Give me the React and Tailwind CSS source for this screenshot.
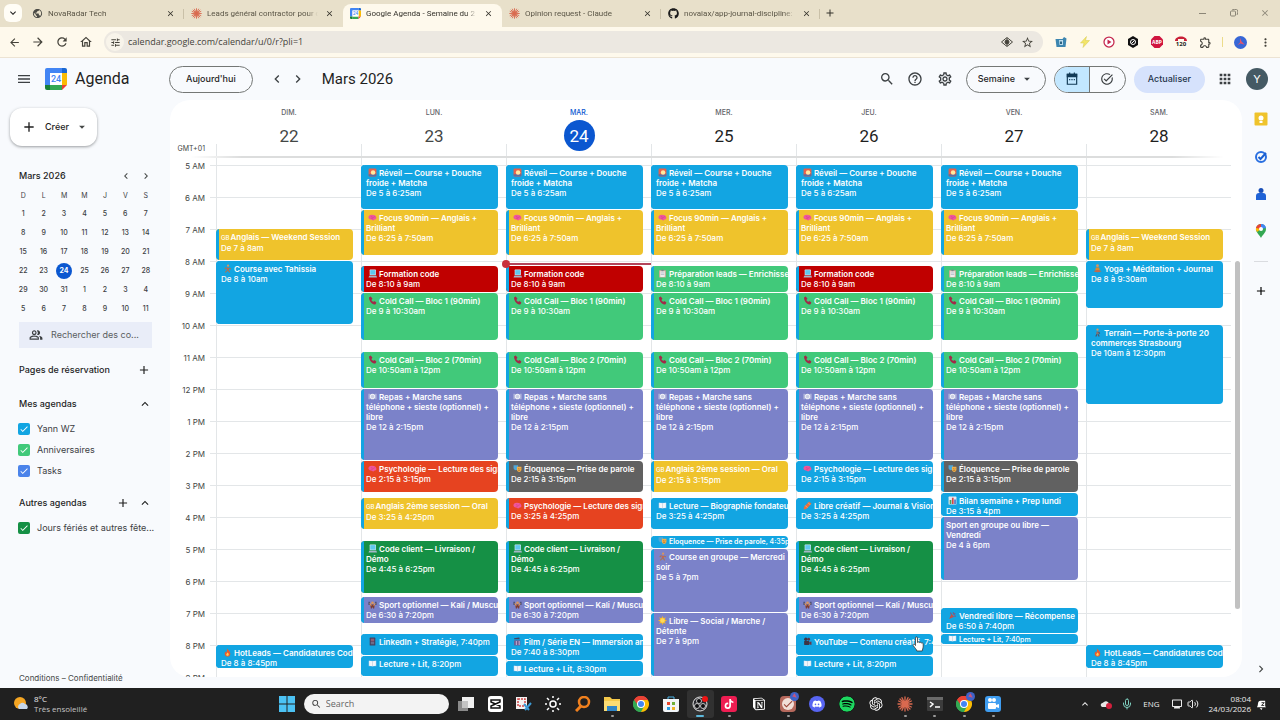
import React from "react";
import {
  MdAdd,
  MdApps,
  MdArrowBack,
  MdArrowDropDown,
  MdArrowForward,
  MdCheck,
  MdChevronLeft,
  MdChevronRight,
  MdClose,
  MdExpandLess,
  MdExpandMore,
  MdHelpOutline,
  MdMenu,
  MdMoreVert,
  MdOutlineExtension,
  MdOutlineHome,
  MdOutlineMonitor,
  MdOutlinePeopleAlt,
  MdOutlineSettings,
  MdOutlineTaskAlt,
  MdPublic,
  MdRefresh,
  MdSearch,
  MdStarBorder,
  MdTune,
} from "react-icons/md";
import { FaDiscord, FaGithub, FaSpotify, FaTiktok } from "react-icons/fa";
import { RiNotionFill, RiOpenaiFill } from "react-icons/ri";
import { Mic, Volume2 } from "lucide-react";

const HOUR = 32;
const FIRST_HOUR = 5;

const COLORS = {
  blue: "bg-[#12a5e2]",
  yellow: "bg-[#efc32c]",
  red: "bg-[#c00000]",
  green: "bg-[#41c97a]",
  purple: "bg-[#7b82c9]",
  orange: "bg-[#e64320]",
  gray: "bg-[#616161]",
  forest: "bg-[#159045]",
};

const ev = (start, end, color, icon, title, time) => ({ start, end, color, icon, title, time });

const at = (h, m = 0) => h + m / 60;

const reveil = ev(5, at(6, 25), "blue", "sunrise", "Réveil — Course + Douche froide + Matcha", "De 5 à 6:25am");
const focus = ev(at(6, 25), at(7, 50), "yellow", "brain", "Focus 90min — Anglais + Brilliant", "De 6:25 à 7:50am");
const formation = ev(at(8, 10), 9, "red", "laptop", "Formation code", "De 8:10 à 9am");
const leads = ev(at(8, 10), 9, "green", "clipboard", "Préparation leads — Enrichissement", "De 8:10 à 9am");
const call1 = ev(9, at(10, 30), "green", "phone", "Cold Call — Bloc 1 (90min)", "De 9 à 10:30am");
const call2 = ev(at(10, 50), 12, "green", "phone", "Cold Call — Bloc 2 (70min)", "De 10:50am à 12pm");
const repas = ev(12, at(14, 15), "purple", "plate", "Repas + Marche sans téléphone + sieste (optionnel) + libre", "De 12 à 2:15pm");
const code = ev(at(16, 45), at(18, 25), "forest", "laptop", "Code client — Livraison / Démo", "De 4:45 à 6:25pm");
const sport = ev(at(18, 30), at(19, 20), "purple", "weights", "Sport optionnel — Kali / Muscu", "De 6:30 à 7:20pm");
const weekend = ev(7, 8, "yellow", "gb", "Anglais — Weekend Session", "De 7 à 8am");
const hotleads = ev(20, at(20, 45), "blue", "fire", "HotLeads — Candidatures Code", "De 8 à 8:45pm");
const lecture820 = ev(at(20, 20), 21, "blue", "book", "Lecture + Lit", "8:20pm");

const DAYS = [
  { name: "DIM.", num: 22, past: true, events: [weekend, ev(8, 10, "blue", "runner", "Course avec Tahissia", "De 8 à 10am"), hotleads] },
  {
    name: "LUN.",
    num: 23,
    past: true,
    events: [
      reveil, focus, formation, call1, call2, repas,
      ev(at(14, 15), at(15, 15), "orange", "brain", "Psychologie — Lecture des signaux", "De 2:15 à 3:15pm"),
      ev(at(15, 25), at(16, 25), "yellow", "gb", "Anglais 2ème session — Oral", "De 3:25 à 4:25pm"),
      code, sport,
      ev(at(19, 40), at(20, 20), "blue", "phonebox", "LinkedIn + Stratégie", "7:40pm"),
      lecture820,
    ],
  },
  {
    name: "MAR.",
    num: 24,
    today: true,
    events: [
      reveil, focus, formation, call1, call2, repas,
      ev(at(14, 15), at(15, 15), "gray", "masks", "Éloquence — Prise de parole", "De 2:15 à 3:15pm"),
      ev(at(15, 25), at(16, 25), "orange", "brain", "Psychologie — Lecture des signaux", "De 3:25 à 4:25pm"),
      code, sport,
      ev(at(19, 40), at(20, 30), "blue", "film", "Film / Série EN — Immersion anglais", "De 7:40 à 8:30pm"),
      ev(at(20, 30), 21, "blue", "book", "Lecture + Lit", "8:30pm"),
    ],
  },
  {
    name: "MER.",
    num: 25,
    events: [
      reveil, focus, leads, call1, call2, repas,
      ev(at(14, 15), at(15, 15), "yellow", "gb", "Anglais 2ème session — Oral", "De 2:15 à 3:15pm"),
      ev(at(15, 25), at(16, 25), "blue", "book", "Lecture — Biographie fondateur", "De 3:25 à 4:25pm"),
      ev(at(16, 35), 17, "blue", "masks", "Eloquence — Prise de parole", "4:35pm"),
      ev(17, 19, "purple", "runner", "Course en groupe — Mercredi soir", "De 5 à 7pm"),
      ev(19, 21, "purple", "sun", "Libre — Social / Marche / Détente", "De 7 à 9pm"),
    ],
  },
  {
    name: "JEU.",
    num: 26,
    events: [
      reveil, focus, formation, call1, call2, repas,
      ev(at(14, 15), at(15, 15), "blue", "brain", "Psychologie — Lecture des signaux", "De 2:15 à 3:15pm"),
      ev(at(15, 25), at(16, 25), "blue", "crayon", "Libre créatif — Journal & Vision", "De 3:25 à 4:25pm"),
      code, sport,
      ev(at(19, 40), at(20, 20), "blue", "camera", "YouTube — Contenu créatif", "7:40pm"),
      lecture820,
    ],
  },
  {
    name: "VEN.",
    num: 27,
    events: [
      reveil, focus, leads, call1, call2, repas,
      ev(at(14, 15), at(15, 15), "gray", "masks", "Éloquence — Prise de parole", "De 2:15 à 3:15pm"),
      ev(at(15, 15), 16, "blue", "chart", "Bilan semaine + Prep lundi", "De 3:15 à 4pm"),
      ev(16, 18, "purple", null, "Sport en groupe ou libre — Vendredi", "De 4 à 6pm"),
      ev(at(18, 50), at(19, 40), "blue", "party", "Vendredi libre — Récompense", "De 6:50 à 7:40pm"),
      ev(at(19, 40), 20, "blue", "book", "Lecture + Lit", "7:40pm"),
    ],
  },
  {
    name: "SAM.",
    num: 28,
    events: [
      weekend,
      ev(8, at(9, 30), "blue", "yoga", "Yoga + Méditation + Journal", "De 8 à 9:30am"),
      ev(10, at(12, 30), "blue", "walker", "Terrain — Porte-à-porte 20 commerces Strasbourg", "De 10am à 12:30pm"),
      hotleads,
    ],
  },
];

const HOURS = ["5 AM", "6 AM", "7 AM", "8 AM", "9 AM", "10 AM", "11 AM", "12 PM", "1 PM", "2 PM", "3 PM", "4 PM", "5 PM", "6 PM", "7 PM", "8 PM", "9 PM"];

const EMOJI = {
  sunrise: (
    <>
      <rect x="1" y="1" width="14" height="14" rx="2" fill="#e8604a" />
      <path d="M1 11h14v2a2 2 0 0 1-2 2H3a2 2 0 0 1-2-2z" fill="#5a6fa5" />
      <circle cx="9" cy="8" r="4" fill="#ffe9a0" />
    </>
  ),
  brain: (
    <>
      <path d="M1 9c-1-3 1-6 6-6 5 0 8 2 8 6 0 2-2 3-4 3-1 2-3 1-4 0-3 0-5-1-6-3z" fill="#f0569c" />
      <path d="M5 6c2 0 2 2 4 2s2-2 4-1M5 10c2-1 3 0 4 1" stroke="#c8408a" fill="none" />
    </>
  ),
  laptop: (
    <>
      <rect x="3" y="1" width="11" height="10" rx="1" fill="#d4e8f5" />
      <rect x="4" y="2" width="9" height="8" fill="#5fc8ee" />
      <path d="M2 12h13l1 3H1z" fill="#a5b7c8" />
    </>
  ),
  clipboard: (
    <>
      <rect x="2" y="2" width="12" height="13" rx="1" fill="#d8a8a0" />
      <rect x="4" y="4" width="8" height="10" fill="#f3f5f6" />
      <path d="M5 7h6M5 10h6" stroke="#8a98a5" />
      <rect x="6" y="1" width="4" height="3" fill="#7c8790" />
    </>
  ),
  phone: <path d="M2 2l3-1 3 4-2 2c1 2 2 3 4 3l2-1 3 3-2 3C7 15 1 8 2 2z" fill="#a32848" />,
  plate: (
    <>
      <circle cx="8" cy="8" r="5" fill="#eef0f6" />
      <circle cx="8" cy="8" r="3" fill="#c9cde4" />
      <path d="M2 3v10M14 3v10" stroke="#c3c7e2" strokeWidth="2" />
    </>
  ),
  masks: (
    <>
      <path d="M1 2h8v5c0 2-2 4-4 4S1 9 1 7z" fill="#4fa7d8" />
      <path d="M7 5h8v5c0 2-2 4-4 4s-4-2-4-4z" fill="#f2b04a" />
      <path d="M9 8h1M12 8h1M9 11h4" stroke="#7a4a12" />
    </>
  ),
  weights: (
    <>
      <circle cx="8" cy="5" r="2.5" fill="#d9955e" />
      <path d="M4 8h8l-1 7H9l-1-3-1 3H5z" fill="#7d3d35" />
      <path d="M1 3h2v6H1zM13 3h2v6h-2z" fill="#3c3f55" />
      <path d="M3 6l3 4M13 6l-3 4" stroke="#d9955e" strokeWidth="2" />
    </>
  ),
  book: (
    <>
      <path d="M1 3h14v10H1z" fill="#7bbde8" />
      <path d="M2 3l6 1 6-1v9l-6 1-6-1z" fill="#f4f6fa" />
      <path d="M8 4v9" stroke="#b8c6d6" />
    </>
  ),
  phonebox: (
    <>
      <rect x="3" y="1" width="10" height="14" rx="1" fill="#45415f" />
      <rect x="5" y="3" width="6" height="5" fill="#8f5d72" />
      <path d="M5 10h6M5 12h6" stroke="#9aa0bd" />
    </>
  ),
  film: (
    <>
      <path d="M2 2l9-1 1 3H2z" fill="#45415f" />
      <rect x="2" y="6" width="11" height="9" fill="#6f5a8f" />
      <path d="M5 7h2v7H5zM10 7h2v7h-2z" fill="#b8a8d0" />
    </>
  ),
  camera: (
    <>
      <circle cx="5" cy="4" r="3" fill="#3c3445" />
      <circle cx="10" cy="4" r="2.5" fill="#5b3347" />
      <rect x="2" y="7" width="9" height="7" rx="1" fill="#3c3445" />
      <path d="M11 9l4-1v6l-4-1z" fill="#6a3646" />
    </>
  ),
  fire: (
    <>
      <path d="M8 1c1 3 5 5 5 9a5 5 0 0 1-10 0c0-2 1-3 2-4 0 2 1 2 1 2 1-2 1-4 2-7z" fill="#ef5a2b" />
      <path d="M8 8c1 1 3 2 2 5a3 3 0 0 1-4 0c-1-2 1-3 2-5z" fill="#ffd05a" />
    </>
  ),
  runner: (
    <>
      <circle cx="9" cy="3" r="2" fill="#d9955e" />
      <path d="M6 6l5 1-1 4H7z" fill="#c4664d" />
      <path d="M6 6L3 9M11 7l3 2M8 11l-4 4M9 11l3 4" stroke="#a87554" strokeWidth="2" fill="none" />
    </>
  ),
  walker: (
    <>
      <circle cx="8" cy="3" r="2" fill="#d9955e" />
      <path d="M6 6h4v5H6z" fill="#8a6f68" />
      <path d="M7 11l-2 4M9 11l2 4M10 7l2 3" stroke="#46536b" strokeWidth="2" />
    </>
  ),
  yoga: (
    <>
      <circle cx="8" cy="3" r="2.5" fill="#d9955e" />
      <path d="M5 6h6l1 5H4z" fill="#d98a2f" />
      <path d="M1 13c4-3 10-3 14 0-4 2-10 2-14 0z" fill="#c46a4a" />
    </>
  ),
  crayon: (
    <>
      <path d="M11 1l4 4-9 9-5 1 1-5z" fill="#e8703c" />
      <path d="M9 3l4 4M4 8l4 4" stroke="#f6c7a8" />
    </>
  ),
  chart: (
    <>
      <rect x="1" y="1" width="14" height="14" rx="1" fill="#e6eaf0" />
      <path d="M3 7h3v7H3z" fill="#45a35a" />
      <path d="M7 3h3v11H7z" fill="#d64545" />
      <path d="M11 6h3v8h-3z" fill="#4a78c8" />
    </>
  ),
  party: (
    <>
      <path d="M2 14l4-9 5 5z" fill="#c0504a" />
      <path d="M9 2l1 3M13 4l-3 3M14 9l-3 0M4 3l2 2" stroke="#7a5a86" strokeWidth="2" />
    </>
  ),
  sun: (
    <>
      <path d="M8 0l2 4 4-2-2 4 4 2-4 2 2 4-4-2-2 4-2-4-4 2 2-4-4-2 4-2-2-4 4 2z" fill="#f3b52a" />
      <circle cx="8" cy="8" r="4" fill="#ffd95a" />
    </>
  ),
};

function Emoji({ name }) {
  if (name === "gb") return <span className="mr-px text-[6px] font-medium">GB</span>;
  return (
    <svg viewBox="0 0 16 16" className="mx-0.5 inline-block size-[9px] align-[-1px]" aria-hidden="true">
      {EMOJI[name]}
    </svg>
  );
}

function Event({ event }) {
  const top = Math.round((event.start - FIRST_HOUR) * HOUR);
  const height = Math.round((event.end - FIRST_HOUR) * HOUR) - top - 1;
  const inline = !event.time.startsWith("De");
  let pad = "pt-[3px] leading-[10px] text-[8px]";
  if (height < 13) pad = "leading-[11px] text-[7px]";
  if (height < 10) pad = "leading-[9px] text-[7px]";
  return (
    <button
      type="button"
      className={`absolute left-0 flex w-[calc(100%-8px)] items-start overflow-hidden rounded-[4px] text-left text-white ${COLORS[event.color]} ${height < 35 ? "whitespace-nowrap" : ""}`}
      style={{ top, height }}
    >
      <span className={`w-[3px] shrink-0 self-stretch ${COLORS.blue}`} />
      <span className={`min-w-0 flex-1 pl-[2px] ${pad}`}>
        <span className="font-semibold">
          {event.icon && <Emoji name={event.icon} />}
          {event.title}
        </span>
        {inline ? <span className="font-medium">, {event.time}</span> : <span className="block font-medium">{event.time}</span>}
      </span>
    </button>
  );
}

function Claude({ className }) {
  return (
    <svg viewBox="0 0 24 24" className={className} stroke="#d9694f" strokeWidth="2" strokeLinecap="round" aria-hidden="true">
      <path d="M12 1.500v21M1.500 12h21M4.500 4.500l15 15M19.500 4.500l-15 15M7.500 2.500l9 19M16.500 2.500l-9 19M2.500 7.500l19 9M2.500 16.500l19-9" />
    </svg>
  );
}

function CalendarLogo({ className }) {
  return (
    <svg viewBox="0 0 22 22" className={className} aria-hidden="true">
      <path d="M2 0h15v5H5v12H0V2a2 2 0 0 1 2-2z" fill="#4285f4" />
      <path d="M17 0h3a2 2 0 0 1 2 2v3h-5z" fill="#1a67d2" />
      <path d="M17 5h5v12h-5z" fill="#fbbc04" />
      <path d="M5 17h12v5H5z" fill="#34a853" />
      <path d="M0 17h5v5H2a2 2 0 0 1-2-2z" fill="#188038" />
      <path d="M17 17h5l-5 5z" fill="#ea4335" />
      <path d="M5 5h12v12H5z" fill="#fff" />
      <text x="11" y="14" textAnchor="middle" fontSize="9" fontFamily="Roboto, sans-serif" fontWeight="500" fill="#4285f4">
        24
      </text>
    </svg>
  );
}

function ChromeLogo({ className }) {
  return (
    <svg viewBox="0 0 24 24" className={className} aria-hidden="true">
      <path d="M12 12L1.600 6A12 12 0 0 1 22.400 6z" fill="#ea4335" />
      <path d="M12 12L22.400 6A12 12 0 0 1 12 24z" fill="#fbbc04" />
      <path d="M12 12v12A12 12 0 0 1 1.600 6z" fill="#34a853" />
      <path d="M12 6h10.400L17 14z" fill="#fbbc04" />
      <path d="M12 6h10.400A12 12 0 0 0 1.600 6L7 14z" fill="#ea4335" />
      <path d="M1.600 6A12 12 0 0 0 12 24l5-9.500-8 2z" fill="#34a853" />
      <circle cx="12" cy="12" r="6" fill="#fff" />
      <circle cx="12" cy="12" r="4.500" fill="#4285f4" />
    </svg>
  );
}

const TABS = [
  { title: "NovaRadar Tech", icon: <MdPublic className="size-[11px] text-[#4a4a45]" /> },
  { title: "Leads général contractor pour c", icon: <Claude className="size-[11px]" /> },
  { title: "Google Agenda - Semaine du 2", icon: <CalendarLogo className="size-[11px]" />, active: true },
  { title: "Opinion request - Claude", icon: <Claude className="size-[11px]" /> },
  { title: "novaiax/app-journal-discipline:", icon: <FaGithub className="size-[11px] text-[#1b1b1b]" /> },
];

function TabStrip() {
  return (
    <div className="flex h-[27px] shrink-0 items-end bg-[#e8e0ca] pl-1 text-[#5a5546]">
      <button type="button" aria-label="Rechercher dans les onglets" className="mb-[5px] mr-[3px] flex size-[18px] items-center justify-center rounded-md bg-[#fffdf6]">
        <MdExpandMore className="size-3 text-[#222]" />
      </button>
      {TABS.map((tab, i) => (
        <div key={tab.title} className={`flex h-[23px] w-[159px] items-center pb-1 pl-[7px] ${tab.active ? "rounded-t-lg bg-[#fef9ec] text-[#33312a]" : ""}`}>
          {tab.icon}
          <button type="button" className="ml-[5px] flex-1 overflow-hidden whitespace-nowrap mask-r-from-90% text-left font-['Roboto',sans-serif] text-[8px] leading-4">
            {tab.title}
          </button>
          <button type="button" aria-label={`Fermer ${tab.title}`} className="ml-1 flex size-[14px] items-center justify-center">
            <MdClose className="size-[9px] text-[#33312a]" />
          </button>
          <span className={`ml-[6px] h-[10px] w-px ${i === 1 || i === 2 ? "" : "bg-[#c9c0a8]"}`} />
        </div>
      ))}
      <button type="button" aria-label="Nouvel onglet" className="mb-[7px] ml-[3px] flex size-[14px] items-center justify-center">
        <MdAdd className="size-3 text-[#33312a]" />
      </button>
      <div className="mb-[5px] ml-auto flex gap-[13px] pr-[6px] text-[#8b8677]">
        <button type="button" aria-label="Réduire" className="flex size-[18px] items-center justify-center">
          <svg viewBox="0 0 8 8" className="size-2" stroke="currentColor">
            <path d="M0 4.500h7" />
          </svg>
        </button>
        <button type="button" aria-label="Restaurer" className="flex size-[18px] items-center justify-center">
          <svg viewBox="0 0 8 8" className="size-2" stroke="currentColor" fill="none">
            <rect x="0.500" y="2" width="5" height="5" rx="1" />
            <path d="M2 1c0-.5 5-1 5.500 0s0 4.500-.5 5" />
          </svg>
        </button>
        <button type="button" aria-label="Fermer" className="flex size-[18px] items-center justify-center">
          <MdClose className="size-[10px]" />
        </button>
      </div>
    </div>
  );
}

function Toolbar() {
  return (
    <div className="flex h-[31px] shrink-0 items-center border-b border-[#ece3d3] bg-[#fef9ec] pl-2 text-[#44423a]">
      <div className="flex items-center gap-[10px]">
        <button type="button" aria-label="Retour"><MdArrowBack className="size-[13px]" /></button>
        <button type="button" aria-label="Suivant"><MdArrowForward className="size-[14px]" /></button>
        <button type="button" aria-label="Actualiser la page"><MdRefresh className="size-[14px]" /></button>
        <button type="button" aria-label="Accueil"><MdOutlineHome className="size-[14px]" /></button>
      </div>
      <div className="ml-[11px] flex h-[22px] flex-1 items-center rounded-full bg-[#ece8e1] pr-[9px] pl-[2px]">
        <span className="flex size-[18px] items-center justify-center rounded-full bg-[#f8f4ea]">
          <MdTune className="size-[11px]" />
        </span>
        <input aria-label="Adresse" defaultValue="calendar.google.com/calendar/u/0/r?pli=1" className="ml-1 min-w-0 flex-1 bg-transparent text-[9px] outline-none" />
        <svg viewBox="0 0 24 24" className="size-3" fill="none" stroke="currentColor" strokeWidth="2">
          <path d="M1 12L12 3l11 9-11 9z" />
          <circle cx="12" cy="12" r="4" fill="currentColor" />
          <path d="M12 4v16" />
        </svg>
        <MdStarBorder className="ml-2 size-[13px]" />
      </div>
      <div className="flex items-center gap-3 pr-2 pl-3">
        <svg viewBox="0 0 24 24" className="size-3"><path d="M1 6h4l1 16H3zM5 6h10l3-4 5 3-2 17H6z" fill="#3d86b0" /><path d="M8 8h8v10H9z" fill="#bcdcec" /><path d="M10 11h4v5h-4z" fill="#2b6485" /></svg>
        <svg viewBox="0 0 24 24" className="size-3"><path d="M15 1L3 14h7l-2 9 13-14h-8z" fill="#f3e568" stroke="#d4c84c" /></svg>
        <svg viewBox="0 0 24 24" className="size-3"><circle cx="12" cy="12" r="10" fill="#fff" stroke="#c4264c" strokeWidth="2.500" /><path d="M9 7l8 5-8 5z" fill="#c4264c" /></svg>
        <svg viewBox="0 0 24 24" className="size-3"><path d="M12 0l10 6v12l-10 6L2 18V6z" fill="#111" /><circle cx="12" cy="12" r="5" fill="none" stroke="#fff" strokeWidth="2" /><path d="M9 15l6-6" stroke="#fff" strokeWidth="2" /></svg>
        <svg viewBox="0 0 24 24" className="size-3"><path d="M7 0h10l7 7v10l-7 7H7l-7-7V7z" fill="#d0153f" /><text x="12" y="16" textAnchor="middle" fontSize="10" fontWeight="700" fill="#fff">ABP</text></svg>
        <span className="flex w-3 flex-col items-center">
          <svg viewBox="0 0 12 5" className="h-[5px] w-3"><path d="M0 5c0-6 12-6 12 0H9V3H3v2z" fill="#c92038" /></svg>
          <span className="text-[6px] leading-[7px] font-bold text-[#222]">120</span>
        </span>
        <MdOutlineExtension className="size-[13px]" />
        <span className="-mr-px -ml-0.5 h-[10px] w-px bg-[#ecdc8a]" />
        <svg viewBox="0 0 24 24" className="size-[13px]"><circle cx="12" cy="12" r="12" fill="#3767d6" /><path d="M11 3l3 7 6 6-8-2-6 3 5-5z" fill="#e0566c" /></svg>
        <MdMoreVert className="size-[13px]" />
      </div>
    </div>
  );
}

function AppHeader() {
  return (
    <header className="flex h-[42px] shrink-0 items-center pr-3 pl-4 text-[#3c4043]">
      <button type="button" aria-label="Menu principal"><MdMenu className="size-4" /></button>
      <CalendarLogo className="ml-[13px] size-[22px]" />
      <span className="ml-2 w-[94px] font-['Roboto',sans-serif] text-[16px] text-[#1f1f1f]">Agenda</span>
      <button type="button" className="h-[27px] rounded-full border border-[#747775] px-4 text-[9px] font-medium text-[#1f1f1f]">
        Aujourd'hui
      </button>
      <button type="button" aria-label="Semaine précédente" className="ml-4"><MdChevronLeft className="size-4" /></button>
      <button type="button" aria-label="Semaine suivante" className="ml-[5px]"><MdChevronRight className="size-4" /></button>
      <h1 className="ml-4 font-['Roboto',sans-serif] text-[15px] text-[#1f1f1f]">Mars 2026</h1>
      <div className="ml-auto flex items-center">
        <button type="button" aria-label="Rechercher"><MdSearch className="size-4" /></button>
        <button type="button" aria-label="Aide" className="ml-3"><MdHelpOutline className="size-4" /></button>
        <button type="button" aria-label="Paramètres" className="ml-[14px]"><MdOutlineSettings className="size-4" /></button>
        <label className="ml-[13px] flex h-[27px] items-center rounded-full border border-[#747775] pr-[11px] pl-[11px]">
          <select aria-label="Affichage" className="appearance-none bg-transparent text-[9px] font-medium text-[#1f1f1f] outline-none">
            <option>Semaine</option>
          </select>
          <MdArrowDropDown className="ml-1 size-[14px]" />
        </label>
        <div className="ml-2 flex h-[27px] overflow-hidden rounded-full border border-[#747775]">
          <button type="button" aria-label="Agenda" className="flex w-[35px] items-center justify-center border-r border-[#747775] bg-[#c2e7ff] text-[#123a56]">
            <svg viewBox="0 0 24 24" className="size-[14px]" fill="none" stroke="currentColor" strokeWidth="2">
              <path d="M4 4h16v17H4zM8 1v4M16 1v4M7 13h2M11 13h2M15 13h2" />
              <path d="M4 4h16v4H4z" fill="currentColor" />
            </svg>
          </button>
          <button type="button" aria-label="Tâches" className="flex w-[35px] items-center justify-center">
            <MdOutlineTaskAlt className="size-[14px]" />
          </button>
        </div>
        <button type="button" className="ml-2 h-[27px] rounded-full bg-[#d6e2fc] px-[14px] text-[9px] font-medium text-[#26364c]">
          Actualiser
        </button>
        <button type="button" aria-label="Applications Google" className="ml-3"><MdApps className="size-4" /></button>
        <button type="button" aria-label="Compte" className="ml-[13px] size-[22px] rounded-full bg-[#455a64] text-[11px] text-white">
          Y
        </button>
      </div>
    </header>
  );
}

const MONTH = [
  [1, 2, 3, 4, 5, 6, 7],
  [8, 9, 10, 11, 12, 13, 14],
  [15, 16, 17, 18, 19, 20, 21],
  [22, 23, 24, 25, 26, 27, 28],
  [29, 30, 31, 1, 2, 3, 4],
  [5, 6, 7, 8, 9, 10, 11],
];

function MiniCalendar() {
  return (
    <>
      <div className="mt-[22px] flex h-4 items-center pr-[18px] pl-[9px] text-[#444746]">
        <h2 className="flex-1 text-[9px] font-medium text-[#1f1f1f]">Mars 2026</h2>
        <button type="button" aria-label="Mois précédent"><MdChevronLeft className="size-3" /></button>
        <button type="button" aria-label="Mois suivant" className="ml-2"><MdChevronRight className="size-3" /></button>
      </div>
      <table className="mt-[3px] ml-[3px] h-[131px] w-[143px] table-fixed text-center text-[7px] leading-[10px] font-medium text-[#3c4043]">
        <thead>
          <tr className="h-[18px]">
            {["D", "L", "M", "M", "J", "V", "S"].map((d, i) => (
              <th key={i} className="h-[18px] p-0 font-normal">{d}</th>
            ))}
          </tr>
        </thead>
        <tbody>
          {MONTH.map((week, w) => (
            <tr key={w} className="h-[18px]">
              {week.map((day) => (
                <td key={day} className="h-[18px] p-0">
                  {w === 3 && day === 24 ? (
                    <span className="mx-auto flex size-4 items-center justify-center rounded-full bg-[#0b57d0] font-bold text-white">24</span>
                  ) : (
                    day
                  )}
                </td>
              ))}
            </tr>
          ))}
        </tbody>
      </table>
    </>
  );
}

function CalendarCheck({ label, color }) {
  return (
    <label className="flex h-[21px] items-center gap-[7px] pl-[8px] text-[9px] text-[#3c4043]">
      <span className="grid size-3 shrink-0">
        <input type="checkbox" defaultChecked className={`col-start-1 row-start-1 size-3 appearance-none rounded-[2px] ${color}`} />
        <MdCheck className="pointer-events-none col-start-1 row-start-1 m-auto size-[10px] text-white" />
      </span>
      <span className="whitespace-nowrap">{label}</span>
    </label>
  );
}

function Sidebar() {
  return (
    <aside className="flex w-[170px] shrink-0 flex-col pt-2 pl-[10px] text-[#1f1f1f]">
      <button type="button" className="flex h-[38px] w-[87px] items-center rounded-xl bg-white pl-[11px] text-[9px] font-medium shadow-[0_1px_3px_rgba(60,64,67,0.5)]">
        <MdAdd className="size-4" />
        <span className="ml-2">Créer</span>
        <MdArrowDropDown className="ml-[6px] size-[14px] text-[#444746]" />
      </button>
      <MiniCalendar />
      <label className="mt-1 ml-[9px] flex h-[26px] w-[133px] items-center bg-[#e9edf8] pl-[10px]">
        <MdOutlinePeopleAlt className="size-[14px] shrink-0 text-[#3c4043]" />
        <input aria-label="Rechercher des contacts" placeholder="Rechercher des co..." className="ml-2 w-full min-w-0 bg-transparent text-[9px] outline-none placeholder:text-[#5a5d61]" />
      </label>
      <div className="mt-[14px] flex h-4 items-center pl-[9px]">
        <h2 className="flex-1 text-[9px] font-medium">Pages de réservation</h2>
        <button type="button" aria-label="Ajouter une page" className="mr-[19px]"><MdAdd className="size-[14px]" /></button>
      </div>
      <div className="mt-[18px] flex h-4 items-center pl-[9px]">
        <h2 className="flex-1 text-[9px] font-medium">Mes agendas</h2>
        <button type="button" aria-label="Réduire mes agendas" className="mr-[18px]"><MdExpandLess className="size-[14px]" /></button>
      </div>
      <div className="mt-[6px]">
        <CalendarCheck label="Yann WZ" color="bg-[#12a5e2]" />
        <CalendarCheck label="Anniversaires" color="bg-[#41c97a]" />
        <CalendarCheck label="Tasks" color="bg-[#4b83ea]" />
      </div>
      <div className="mt-[14px] flex h-4 items-center pl-[9px]">
        <h2 className="flex-1 text-[9px] font-medium">Autres agendas</h2>
        <button type="button" aria-label="Ajouter un agenda" className="mr-2"><MdAdd className="size-[14px]" /></button>
        <button type="button" aria-label="Réduire autres agendas" className="mr-[18px]"><MdExpandLess className="size-[14px]" /></button>
      </div>
      <div className="mt-[6px]">
        <CalendarCheck label="Jours fériés et autres fête..." color="bg-[#159045]" />
      </div>
      <p className="mt-auto mb-1 pl-[9px] text-[8px] leading-3 text-[#444746]">
        <a href="#conditions">Conditions</a> – <a href="#confidentialite">Confidentialité</a>
      </p>
    </aside>
  );
}

function WeekGrid() {
  return (
    <section className="mb-[11px] flex min-w-0 flex-1 flex-col overflow-hidden rounded-[20px] bg-white">
      <div className="flex h-[56px] shrink-0 pr-[11px]">
        <div className="flex w-[46px] items-end justify-end pr-[11px] pb-[2px] text-[7px] leading-[10px] text-[#444746]">GMT+01</div>
        <div className="grid flex-1 grid-cols-7">
          {DAYS.map((day) => (
            <div key={day.num} className="flex items-end">
              <span className="h-3 w-px shrink-0 bg-[#e3e6e8]" />
              <div className={`flex h-full flex-1 flex-col items-center pt-2 text-[7px] leading-[10px] font-medium ${day.today ? "text-[#0b57d0]" : "text-[#5f6368]"}`}>
                {day.name}
                <span
                  className={`mt-[2px] flex size-[31px] items-center justify-center rounded-full font-['Roboto',sans-serif] text-[17px] font-normal ${
                    day.today ? "bg-[#0b57d0] text-white" : day.past ? "text-[#444746]" : "text-[#1f1f1f]"
                  }`}
                >
                  {day.num}
                </span>
              </div>
            </div>
          ))}
        </div>
      </div>
      <div className="mr-[18px] ml-5 h-[2px] shrink-0 bg-[#dcdddd] mask-x-from-95%" />
      <div className="flex min-h-0 flex-1 overflow-hidden">
        <div className="w-10 shrink-0 pr-[5px] text-right text-[8px] leading-4 text-[#444746]">
          {HOURS.map((h) => (
            <div key={h} className="h-8">{h}</div>
          ))}
        </div>
        <div className="grid flex-1">
          <div className="col-start-1 row-start-1 pt-[7px]">
            {HOURS.map((h) => (
              <div key={h} className="h-8 border-t border-[#e3e6e8]" />
            ))}
          </div>
          <div className="col-start-1 row-start-1 ml-[6px] grid grid-cols-7">
            {DAYS.map((day) => (
              <div key={day.num} className="border-l border-[#e3e6e8] pt-[7px]">
                <div className="relative -ml-px">
                  {day.events.map((event) => (
                    <Event key={event.start} event={event} />
                  ))}
                  {day.today && (
                    <div className="absolute top-[98px] right-0 left-0 h-[2px] bg-[#b4455a]">
                      <span className="absolute -top-[3px] -left-1 size-2 rounded-full bg-[#c8303c]" />
                    </div>
                  )}
                </div>
              </div>
            ))}
          </div>
        </div>
        <div className="w-[11px] shrink-0 pt-[103px] pl-1">
          <div className="h-[348px] w-[5px] rounded-full bg-[#c1c1c1]" />
        </div>
      </div>
    </section>
  );
}

function SideRail() {
  return (
    <nav className="flex w-[38px] shrink-0 flex-col items-center pt-[12px]">
      <button type="button" aria-label="Keep">
        <svg viewBox="0 0 14 14" className="size-[14px]"><rect x="0.500" y="0.500" width="13" height="13" rx="1" fill="#efc32c" /><circle cx="7" cy="6" r="2.500" fill="#fff" /><path d="M5.500 10h3" stroke="#fff" strokeWidth="2" /></svg>
      </button>
      <button type="button" aria-label="Tasks" className="mt-[24px]">
        <svg viewBox="0 0 14 14" className="size-[14px]" fill="none" strokeWidth="2"><circle cx="7" cy="7" r="5" stroke="#2a6fe0" /><path d="M4.500 7l2 2L12 3" stroke="#1a5fd0" /></svg>
      </button>
      <button type="button" aria-label="Contacts" className="mt-[23px]">
        <svg viewBox="0 0 14 14" className="size-[14px]"><circle cx="7" cy="3.500" r="2.500" fill="#1a4fb8" /><path d="M2 13V9a3 3 0 0 1 3-3h4a3 3 0 0 1 3 3v4z" fill="#1f62d6" /></svg>
      </button>
      <button type="button" aria-label="Maps" className="mt-[23px]">
        <svg viewBox="0 0 14 14" className="size-[14px]">
          <path d="M7 14c-1-3-5-5-5-9a5 5 0 0 1 5-5z" fill="#34a853" />
          <path d="M7 14c1-3 5-5 5-9a5 5 0 0 0-5-5z" fill="#34a853" />
          <path d="M2 6a5 5 0 0 1 5-6v5z" fill="#ea4335" />
          <path d="M7 0a5 5 0 0 1 5 4L7 5z" fill="#4285f4" />
          <path d="M3 8a5 5 0 0 1-1-4l5 1z" fill="#fbbc04" />
          <circle cx="7" cy="5" r="2" fill="#fff" />
        </svg>
      </button>
      <span className="mt-[23px] h-px w-[14px] bg-[#dadce0]" />
      <button type="button" aria-label="Modules complémentaires" className="mt-[22px]"><MdAdd className="size-[14px]" /></button>
      <button type="button" aria-label="Masquer le panneau" className="mt-auto mb-[12px]"><MdChevronRight className="size-[14px] text-[#444746]" /></button>
    </nav>
  );
}

const Badge = () => (
  <svg viewBox="0 0 8 8" className="absolute -top-1 -right-[3px] size-[9px]"><circle cx="4" cy="4" r="4" fill="#3f62c8" /><path d="M4 1l2 4-4-1z" fill="#c9557a" /></svg>
);

const APPS = [
  { name: "Bureau", icon: <svg viewBox="0 0 16 16" className="size-4"><rect x="0" y="5" width="10" height="10" fill="#8a8a8a" /><rect x="4" y="1" width="12" height="11" fill="#f0f0f0" /><rect x="4" y="5" width="6" height="7" fill="#c4c4c4" /></svg> },
  { name: "CapCut", icon: <svg viewBox="0 0 16 16" className="size-4"><rect x="1" width="15" height="16" rx="3" fill="#fff" /><path d="M13 6V4H4v2l9 4v2H4v-2l9-4z" fill="none" stroke="#111" strokeWidth="1.500" /></svg> },
  { name: "Capture", icon: <svg viewBox="0 0 16 16" className="size-4"><rect x="0" y="1" width="11" height="12" fill="#f3f3f3" /><path d="M2 3h7v7H2z" fill="none" stroke="#d04848" strokeDasharray="2 1" strokeWidth="1.500" /><path d="M8 8l5 6M15 7l-6 7" stroke="#3d9bd6" strokeWidth="2" /></svg> },
  { name: "Luminosité", icon: <svg viewBox="0 0 16 16" className="size-4" stroke="#fff" strokeWidth="1.500"><circle cx="8" cy="8" r="3" fill="none" /><path d="M8 0v2M8 14v2M0 8h2M14 8h2M2 2l2 2M12 12l2 2M2 14l2-2M12 4l2-2" /></svg> },
  { name: "Everything", icon: <svg viewBox="0 0 16 16" className="size-4" stroke="#f0801e" fill="none"><circle cx="9" cy="6" r="5" strokeWidth="2.500" /><path d="M6 10l-5 5" strokeWidth="3" /></svg> },
  { name: "Explorateur", run: true, icon: <svg viewBox="0 0 16 16" className="size-4"><path d="M0 1h6l2 2h8v12H0z" fill="#f5c94a" /><path d="M0 5h16v10H0z" fill="#fbdc74" /><path d="M3 10h10v5H3z" fill="#2f86c9" /></svg> },
  { name: "Chrome", icon: <ChromeLogo className="size-4" /> },
  { name: "Store", icon: <svg viewBox="0 0 16 16" className="size-4"><path d="M5 4V1h6v3" stroke="#4cb4e8" fill="none" /><path d="M0 3h16v11a2 2 0 0 1-2 2H2a2 2 0 0 1-2-2z" fill="#f3f6f8" /><path d="M4 6h3v3H4z" fill="#e8482c" /><path d="M9 6h3v3H9z" fill="#6fb03a" /><path d="M4 11h3v3H4z" fill="#2a9de0" /><path d="M9 11h3v3H9z" fill="#f0b429" /></svg> },
  { name: "OBS", active: true, icon: <svg viewBox="0 0 16 16" className="size-4"><circle cx="8" cy="8" r="7" fill="#2a2a30" stroke="#e5e5e5" /><circle cx="7" cy="5" r="2.500" fill="#0d0d10" stroke="#c4c4c4" /><circle cx="5" cy="10" r="2.500" fill="#0d0d10" stroke="#c4c4c4" /><circle cx="11" cy="10" r="2.500" fill="#0d0d10" stroke="#c4c4c4" /><circle cx="13" cy="3" r="3" fill="#f01414" /></svg> },
  { name: "TikTok", run: true, icon: <span className="flex size-4 shrink-0 items-center justify-center rounded-[3px] bg-[#ee1d52] text-white"><FaTiktok className="size-[10px]" /></span> },
  { name: "Notion", icon: <RiNotionFill className="size-4 text-white" /> },
  { name: "Tâches", run: true, icon: <span className="relative flex size-4 shrink-0 items-center justify-center rounded-[4px] bg-[#b5685c] text-white"><MdCheck className="size-3 rounded-full bg-[#f2dfd8] text-[#9a4438]" /><Badge /></span> },
  { name: "Discord", icon: <span className="flex size-4 shrink-0 items-center justify-center rounded-full bg-[#5865f2] text-white"><FaDiscord className="size-[10px]" /></span> },
  { name: "Spotify", icon: <FaSpotify className="size-4 rounded-full bg-black text-[#1ed760]" /> },
  { name: "ChatGPT", icon: <RiOpenaiFill className="size-4 text-white" /> },
  { name: "Claude", run: true, icon: <Claude className="size-4" /> },
  { name: "Terminal", run: true, icon: <svg viewBox="0 0 16 16" className="size-4"><rect y="1" width="16" height="14" rx="1" fill="#3c3c3c" /><path d="M0 1h16v3H0z" fill="#6a6a6a" /><path d="M3 6l3 2-3 3M8 11h5" stroke="#fff" strokeWidth="1.500" fill="none" /></svg> },
  { name: "Chrome profil", run: true, icon: <span className="relative"><ChromeLogo className="size-4" /><Badge /></span> },
  { name: "Enregistreur", run: true, icon: <svg viewBox="0 0 16 16" className="size-4"><rect width="16" height="16" rx="3" fill="#3f9df0" /><circle cx="5" cy="4" r="2" fill="#fff" /><circle cx="9" cy="4" r="2" fill="#fff" /><rect x="3" y="7" width="8" height="6" rx="1" fill="#fff" /><path d="M11 9l3-1v4l-3-1z" fill="#fff" /></svg> },
];

function Taskbar() {
  return (
    <footer className="grid h-8 shrink-0 grid-cols-[1fr_auto_1fr] items-center bg-[#202020] text-[#ececec]">
      <div className="flex items-center pl-[13px] text-[8px] leading-[10px]">
        <svg viewBox="0 0 16 16" className="size-4"><circle cx="7" cy="7" r="6" fill="#f5a623" /><path d="M6 13a3 3 0 0 1 1-5 3 3 0 0 1 5 0 3 3 0 0 1 2 5z" fill="#c7d7ea" /></svg>
        <div className="ml-[5px]">
          <div>8°C</div>
          <div className="text-[#c4c4c4]">Très ensoleillé</div>
        </div>
      </div>
      <div className="flex items-center pl-[6px]">
        <button type="button" aria-label="Démarrer" className="mr-[9px]">
          <svg viewBox="0 0 16 16" className="size-4" fill="#4cc2f4"><path d="M0 0h7.500v7.500H0zM8.500 0H16v7.500H8.500zM0 8.500h7.500V16H0zM8.500 8.500H16V16H8.500z" /></svg>
        </button>
        <label className="mr-[3px] flex h-5 w-[145px] items-center rounded-full bg-[#f3f3f3] pl-[7px]">
          <MdSearch className="size-3 text-[#333]" />
          <input aria-label="Search" placeholder="Search" className="ml-1 w-full min-w-0 bg-transparent text-[9px] outline-none placeholder:text-[#666]" />
        </label>
        <div className="flex w-[555px] items-center justify-between">
          {APPS.map((app) => (
            <button key={app.name} type="button" aria-label={app.name} className={`flex h-[28px] w-[27px] flex-col items-center rounded-[3px] pt-[6px] ${app.active ? "bg-[#313131]" : ""}`}>
              {app.icon}
              {(app.run || app.active) && <span className={`mt-[3px] h-[2px] shrink-0 rounded-full ${app.active ? "w-2 bg-[#5cb8dc]" : "w-[3px] bg-[#9a9a9a]"}`} />}
            </button>
          ))}
        </div>
      </div>
      <div className="flex items-center justify-end pr-[13px] text-[8px] leading-[10px]">
        <MdExpandLess className="size-3" />
        <svg viewBox="0 0 12 12" className="ml-[9px] size-3"><path d="M1 8c-1-3 2-3 3-4 2-2 5 0 5 2 2 0 2 3 0 3H2z" fill="#e6e6e6" /><circle cx="9" cy="8" r="3" fill="#d21f3c" /></svg>
        <Mic className="ml-[9px] size-3 text-[#7fd0c0]" />
        <span className="ml-[10px]">ENG</span>
        <MdOutlineMonitor className="ml-[11px] size-3" />
        <Volume2 className="ml-[4px] size-3" />
        <div className="ml-[10px] text-right">
          <div>08:04</div>
          <div>24/03/2026</div>
        </div>
        <svg viewBox="0 0 12 12" className="ml-[5px] size-[11px]"><path d="M1 9c2-2 0-7 4-7h5v6l1 1zM4 10h3l-1 2z" fill="#fff" /><path d="M6 4h3L6 7h3" stroke="#222" fill="none" /></svg>
      </div>
    </footer>
  );
}

export default function App() {
  return (
    <div className="flex h-screen flex-col overflow-hidden bg-[#f8fafd] font-['Inter',sans-serif]">
      <div className="font-['Open_Sans',sans-serif]">
        <TabStrip />
        <Toolbar />
      </div>
      <AppHeader />
      <main className="flex min-h-0 flex-1">
        <Sidebar />
        <WeekGrid />
        <SideRail />
      </main>
      <div className="font-['Open_Sans',sans-serif]">
        <Taskbar />
      </div>
      <svg viewBox="0 0 12 16" className="pointer-events-none absolute top-[636px] left-[912px] h-4 w-3" fill="#fff" stroke="#333" strokeWidth="0.800" strokeLinejoin="round">
        <path d="M3.500 9.500V2c0-1.500 2-1.500 2 0v4.500c.5-1 1.800-.6 1.900.2.500-.8 1.700-.5 1.900.4.600-.6 1.900-.2 1.900.9v3c0 1.500-1 2.500-1 4H4.800c0-1.500-2-3-3.600-5.500-.6-1 .6-1.700 1.300-1z" />
      </svg>
    </div>
  );
}
